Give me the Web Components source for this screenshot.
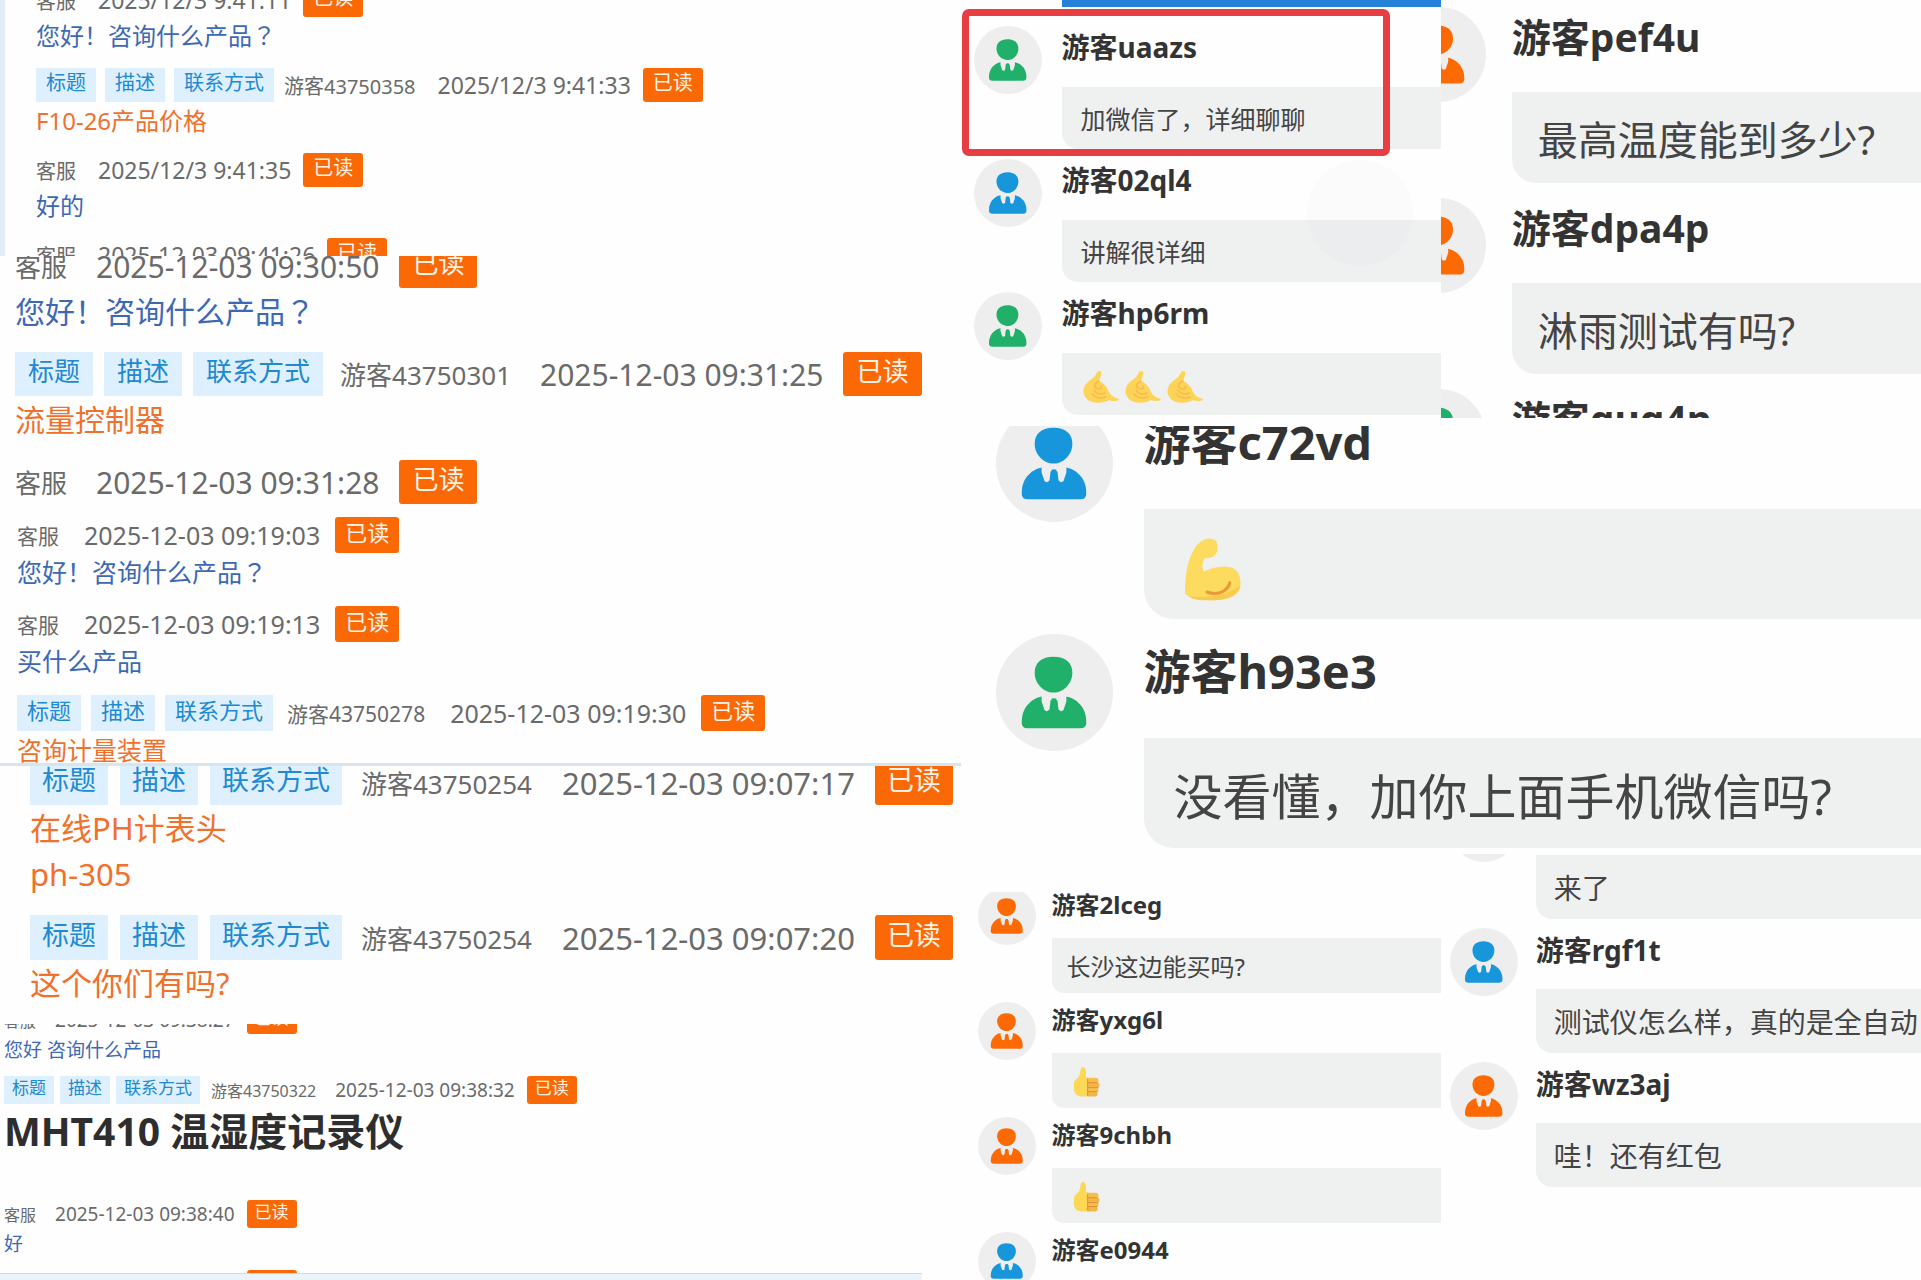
<!DOCTYPE html>
<html lang="zh-CN">
<head>
<meta charset="utf-8">
<title>客服消息</title>
<style>
body {
    margin: 0;
    height: 100vh;
    overflow: hidden;
    display: grid;
    grid-template-columns: 1fr 1fr;
    background: #fefefe;
    font-family: "Noto Sans", "Noto Sans CJK SC", sans-serif;
}

.logs {
    display: grid;
    grid-template-rows: 256fr 253fr 257fr 258fr 249fr 7fr;
    min-width: 0;
    min-height: 0;
}

.rooms {
    display: grid;
    grid-template-columns: 1fr 1fr;
    grid-template-rows: 418fr 428fr 426fr;
    row-gap: 4px;
    min-width: 0;
    min-height: 0;
}

.side {
    border-left: 5px solid #e3edf9;
}

.ruled {
    border-bottom: 3px solid #d8e5ef;
}

.strip {
    width: 96%;
    box-sizing: border-box;
    border-top: 1px solid #c9deea;
    background: #eaf4f9;
}

.wide {
    grid-column: 1 / 3;
    margin-top: 4px;
}

.low {
    margin-top: 38px;
}

/* full-width question mark, centred in its square */
.mark {
    font-family: "Noto Sans CJK JP", sans-serif;
    line-height: 1;
}

.banner {
    height: 7px;
    margin-left: 101px;
    background: #2581d8;
}

.marker {
    position: absolute;
    top: 9px;
    left: 1px;
    right: 51px;
    height: 133px;
    border: 7px solid #e63e43;
    border-radius: 7px;
}

.bubble-button {
    position: absolute;
    top: 160px;
    right: 28px;
    width: 106px;
    height: 106px;
    border-radius: 50%;
    background: rgba(120, 120, 160, 0.02);
}
</style>
</head>
<body>
<main class="logs">
    <log-panel class="side" size="s">
        <log-entry who="客服" time="2025/12/3 9:41:11">您好！咨询什么产品<span class="mark" lang="ja">？</span></log-entry>
        <log-entry guest who="游客43750358" time="2025/12/3 9:41:33">F10-26产品价格</log-entry>
        <log-entry who="客服" time="2025/12/3 9:41:35">好的</log-entry>
        <log-entry who="客服" time="2025-12-03 09:41:26"></log-entry>
    </log-panel>
    <log-panel size="l">
        <log-entry who="客服" time="2025-12-03 09:30:50">您好！咨询什么产品<span class="mark" lang="ja">？</span></log-entry>
        <log-entry guest who="游客43750301" time="2025-12-03 09:31:25">流量控制器</log-entry>
        <log-entry who="客服" time="2025-12-03 09:31:28"></log-entry>
    </log-panel>
    <log-panel class="ruled" size="m">
        <log-entry who="客服" time="2025-12-03 09:19:03">您好！咨询什么产品<span class="mark" lang="ja">？</span></log-entry>
        <log-entry who="客服" time="2025-12-03 09:19:13">买什么产品</log-entry>
        <log-entry guest who="游客43750278" time="2025-12-03 09:19:30">咨询计量装置</log-entry>
    </log-panel>
    <log-panel size="xl">
        <log-entry guest who="游客43750254" time="2025-12-03 09:07:17">在线PH计表头<br>ph-305</log-entry>
        <log-entry guest who="游客43750254" time="2025-12-03 09:07:20">这个你们有吗?</log-entry>
    </log-panel>
    <log-panel size="xs">
        <log-entry who="客服" time="2025-12-03 09:38:27">您好 咨询什么产品</log-entry>
        <log-entry guest who="游客43750322" time="2025-12-03 09:38:32"><h2>MHT410 温湿度记录仪</h2></log-entry>
        <log-entry who="客服" time="2025-12-03 09:38:40">好</log-entry>
        <log-entry who="客服" time="2025-12-03 09:38:41"></log-entry>
    </log-panel>
    <div class="strip"></div>
</main>

<section class="rooms">
    <room-panel size="m">
        <div class="banner" slot="top"></div>
        <guest-message name="游客uaazs" color="green">加微信了，详细聊聊</guest-message>
        <guest-message name="游客02ql4" color="blue">讲解很详细</guest-message>
        <guest-message name="游客hp6rm" color="green"><emoji-icon name="call"></emoji-icon><emoji-icon name="call"></emoji-icon><emoji-icon name="call"></emoji-icon></guest-message>
        <div class="bubble-button" slot="over"></div>
        <div class="marker" slot="over"></div>
    </room-panel>
    <room-panel size="l">
        <guest-message name="游客pef4u" color="orange">最高温度能到多少?</guest-message>
        <guest-message name="游客dpa4p" color="orange">淋雨测试有吗?</guest-message>
        <guest-message name="游客gug4p" color="green"></guest-message>
    </room-panel>
    <room-panel class="wide" size="xl">
        <guest-message name="游客c72vd" color="blue"><emoji-icon name="muscle"></emoji-icon></guest-message>
        <guest-message name="游客h93e3" color="green">没看懂，加你上面手机微信吗?</guest-message>
    </room-panel>
    <room-panel class="low" size="s">
        <guest-message name="游客2lceg" color="orange">长沙这边能买吗?</guest-message>
        <guest-message name="游客yxg6l" color="orange"><emoji-icon name="thumb"></emoji-icon></guest-message>
        <guest-message name="游客9chbh" color="orange"><emoji-icon name="thumb"></emoji-icon></guest-message>
        <guest-message name="游客e0944" color="blue"></guest-message>
    </room-panel>
    <room-panel size="ml">
        <guest-message name="" color="green">来了</guest-message>
        <guest-message name="游客rgf1t" color="blue">测试仪怎么样，真的是全自动</guest-message>
        <guest-message name="游客wz3aj" color="orange">哇！还有红包</guest-message>
    </room-panel>
</section>

<script>
function attach(element, html){
    const template = document.createElement("template");
    template.innerHTML = html;
    element.attachShadow({ mode: "open" });
    element.shadowRoot.appendChild(template.content.cloneNode(true));
}

// Scrolled chat log. The size attribute sets the scale of all entries in it.
class LogPanel extends HTMLElement {
    constructor(){
        super();
        attach(this, `
<style>
:host {
    display: block;
    overflow: hidden;
    min-height: 0;
}

.list {
    margin: var(--start) 0 0 var(--left);
}

:host([size="xs"]) {
    --left: 4px; --start: -18px; --row: 28px; --line: 32px; --space: 10px;
    --label: 17px; --name: 16px; --time: 19px; --text: 19px;
    --pad: 8px; --tag-gap: 6px; --tags-gap: 11px; --name-gap: 19px; --read-gap: 12px;
}

:host([size="s"]) {
    --left: 31px; --start: -17px; --row: 34px; --line: 38px; --space: 13px;
    --label: 20px; --name: 20px; --time: 23px; --text: 24px;
    --pad: 10px; --tag-gap: 9px; --tags-gap: 10px; --name-gap: 22px; --read-gap: 12px;
}

:host([size="m"]) {
    --left: 17px; --start: 8px; --row: 36px; --line: 38px; --space: 15px;
    --label: 22px; --name: 21px; --time: 25px; --text: 25px;
    --pad: 10px; --tag-gap: 10px; --tags-gap: 14px; --name-gap: 25px; --read-gap: 15px;
}

:host([size="l"]) {
    --left: 15px; --start: -12px; --row: 44px; --line: 48px; --space: 16px;
    --label: 26px; --name: 26px; --time: 30px; --text: 30px;
    --pad: 13px; --tag-gap: 11px; --tags-gap: 17px; --name-gap: 29px; --read-gap: 20px;
}

:host([size="xl"]) {
    --left: 30px; --start: -6px; --row: 45px; --line: 46px; --space: 18px;
    --label: 27px; --name: 26px; --time: 31px; --text: 31px;
    --pad: 12px; --tag-gap: 12px; --tags-gap: 19px; --name-gap: 30px; --read-gap: 20px;
}
</style>
<div class="list"><slot></slot></div>`);
    }
}

class LogEntry extends HTMLElement {
    constructor(){
        super();
        attach(this, `
<style>
:host {
    display: flow-root;
    margin-bottom: var(--space);
    white-space: nowrap;
    color: #3d68b4;
}

:host([guest]) {
    color: #f0702c;
}

header {
    display: flex;
    align-items: center;
    height: var(--row);
    color: #6a6a6a;
}

.tags {
    display: none;
    gap: var(--tag-gap);
    margin-right: var(--tags-gap);
}

:host([guest]) .tags {
    display: flex;
}

.tags span, .read {
    box-sizing: border-box;
    height: var(--row);
    line-height: calc(var(--row) - 5px);
    padding: 0 var(--pad);
    font-size: var(--label);
}

.tags span {
    color: #2089d2;
    background: #def0fd;
}

.who {
    font-size: var(--name);
    margin-right: var(--name-gap);
}

time {
    font-size: var(--time);
    margin-right: var(--read-gap);
}

.read {
    color: #fff3e8;
    background: #fb6906;
    border-radius: 3px;
}

.text {
    font-size: var(--text);
    line-height: var(--line);
    min-height: var(--line);
}

::slotted(h2) {
    margin: 0 0 32px;
    font-size: 39px;
    line-height: 54px;
    color: #2e2e2e;
}
</style>
<header>
    <div class="tags"><span>标题</span><span>描述</span><span>联系方式</span></div>
    <span class="who"></span>
    <time></time>
    <span class="read">已读</span>
</header>
<div class="text"><slot></slot></div>`);
    }

    connectedCallback(){
        this.shadowRoot.querySelector(".who").textContent = this.getAttribute("who");
        this.shadowRoot.querySelector("time").textContent = this.getAttribute("time");
    }
}

// Live room comments, same idea as LogPanel
class RoomPanel extends HTMLElement {
    constructor(){
        super();
        attach(this, `
<style>
:host {
    display: block;
    position: relative;
    overflow: hidden;
    min-width: 0;
    min-height: 0;
}

.list {
    margin: var(--start) 0 0 var(--left);
}

:host([size="s"]) {
    --left: 17px; --start: -5px; --avatar: 58px; --between: 16px;
    --head: 51px; --line: 36px; --bubble: 55px; --space: 9px;
    --name: 24px; --text: 24px; --pad: 15px; --round: 12px;
}

:host([size="m"]) {
    --left: 13px; --start: 19px; --avatar: 68px; --between: 20px;
    --head: 61px; --line: 42px; --bubble: 62px; --space: 10px;
    --name: 28px; --text: 25px; --pad: 19px; --round: 16px;
}

:host([size="ml"]) {
    --left: 9px; --start: -60px; --avatar: 68px; --between: 18px;
    --head: 61px; --line: 44px; --bubble: 64px; --space: 9px;
    --name: 28px; --text: 28px; --pad: 18px; --round: 16px;
}

:host([size="l"]) {
    --left: -50px; --start: 7px; --avatar: 95px; --between: 26px;
    --head: 85px; --line: 60px; --bubble: 91px; --space: 15px;
    --name: 39px; --text: 40px; --pad: 26px; --round: 24px;
}

:host([size="xl"]) {
    --left: 35px; --start: -21px; --avatar: 117px; --between: 31px;
    --head: 104px; --line: 75px; --bubble: 110px; --space: 15px;
    --name: 47px; --text: 49px; --pad: 30px; --round: 30px;
}
</style>
<slot name="top"></slot>
<div class="list"><slot></slot></div>
<slot name="over"></slot>`);
    }
}

class GuestMessage extends HTMLElement {
    constructor(){
        super();
        attach(this, `
<style>
:host {
    display: flex;
    align-items: flex-start;
    gap: var(--between);
    margin-bottom: var(--space);
    white-space: nowrap;
}

svg {
    flex: none;
    width: var(--avatar);
    height: var(--avatar);
    color: #1896db;
}

:host([color="green"]) svg {
    color: #20b06a;
}

:host([color="orange"]) svg {
    color: #fd6a04;
}

.column {
    flex: 1;
    min-width: 0;
}

.name {
    height: var(--head);
    line-height: var(--line);
    font-size: var(--name);
    font-weight: bold;
    color: #333;
}

.bubble {
    display: flex;
    align-items: center;
    height: var(--bubble);
    padding-left: var(--pad);
    font-size: var(--text);
    color: #444;
    background: #eff0f0;
    border-bottom-left-radius: var(--round);
}
</style>
<svg viewBox="0 0 118 118" aria-hidden="true">
    <circle cx="59" cy="59" r="59" fill="#eee"/>
    <path fill="currentColor" d="M58 23C70 23 77 29 77 39C77 50 68 59 58 59C48 59 39 50 39 39C39 29 46 23 58 23Z"/>
    <path fill="currentColor" d="M26 88C26 74 36 65 46 63L71 63C81 65 91 74 91 88V90Q91 95 85 95H32Q26 95 26 90Z"/>
    <path fill="#eee" d="M46 61H71L71 68L68 77Q65 79 63 76L62 67L58 65L55 67L54 76Q52 79 49 77L46 68Z"/>
    <path fill="currentColor" d="M56 65H61L60 69L62 77H55L57 69Z"/>
</svg>
<div class="column">
    <div class="name"></div>
    <div class="bubble"><slot></slot></div>
</div>`);
    }

    connectedCallback(){
        this.shadowRoot.querySelector(".name").textContent = this.getAttribute("name");
    }
}

const emojis = {
    thumb: `<svg viewBox="-7 -6 39 39">
    <path fill="#fdd756" d="M9 0C12 0 13 4 12 10L15 11V30H8C3 30 0 27 0 22V17C0 14 3 12 5 10C7 7 6 1 9 0Z"/>
    <rect x="13" y="11" width="12" height="6" rx="3" fill="#f6be4c"/>
    <rect x="13" y="16" width="13" height="5" rx="2" fill="#f3b548"/>
    <rect x="13" y="21" width="12" height="5" rx="2" fill="#f6be4c"/>
    <rect x="13" y="25" width="11" height="5" rx="2" fill="#f3b548"/>
    <path fill="none" stroke="#dc9238" d="M14 16H24M14 21H25M14 25H24M14 12V29"/>
</svg>`,
    muscle: `<svg viewBox="-10 -13 76 76">
    <path fill="#fddb5f" d="M24 0C30 0 33 4 32 9C33 15 27 20 20 19C17 24 17 29 19 32C26 29 35 26 45 28C53 30 56 40 54 48C51 58 38 60 26 60C14 60 5 58 1 54C0 40 3 14 15 4C18 1 21 0 24 0Z"/>
    <path fill="#fac94f" d="M4 56C20 58 40 57 54 46C51 58 38 60 26 60C14 60 8 59 4 56Z"/>
    <path fill="none" stroke="#e99a35" stroke-width="3" stroke-linecap="round" d="M22 52C32 56 42 51 44 43"/>
</svg>`,
    call: `<svg viewBox="-2 -7 40 40">
    <path fill="#fdd358" d="M16 0C19 0 19 3 17 7L16 10C21 12 24 16 26 21C28 25 32 27 36 28C35 31 29 30 26 29C20 33 8 33 3 27C-1 22 0 15 5 11C9 8 13 5 14 1Z"/>
    <path fill="none" stroke="#f6bb4c" stroke-width="1.5" stroke-linecap="round" d="M16 10C12 12 10 15 13 17C16 19 20 18 18 15M11 19C13 23 18 24 22 22M9 23C12 27 18 28 23 26"/>
</svg>`
};

class EmojiIcon extends HTMLElement {
    constructor(){
        super();
        attach(this, `
<style>
:host {
    display: block;
    width: 1.6em;
    height: 1.6em;
    margin-right: 2px;
}

svg {
    display: block;
    width: 100%;
    height: 100%;
}
</style>
<div></div>`);
    }

    connectedCallback(){
        this.shadowRoot.querySelector("div").innerHTML = emojis[this.getAttribute("name")];
    }
}

window.customElements.define("log-panel", LogPanel);
window.customElements.define("log-entry", LogEntry);
window.customElements.define("room-panel", RoomPanel);
window.customElements.define("guest-message", GuestMessage);
window.customElements.define("emoji-icon", EmojiIcon);
</script>
</body>
</html>
